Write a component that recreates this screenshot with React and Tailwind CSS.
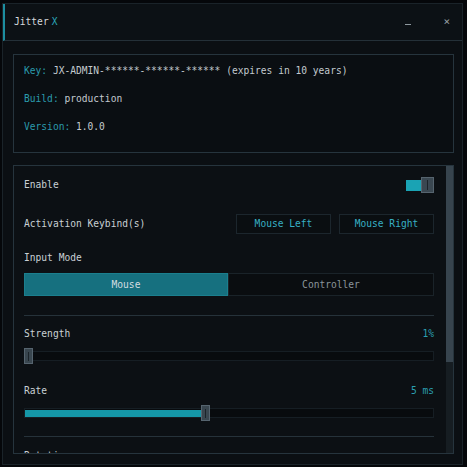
import React from "react";

const mono = { fontFamily: '"DejaVu Sans Mono", "Liberation Mono", monospace' };

function Slider({ knobLeft, filled }) {
  return (
    <div className="relative h-[16px] w-full">
      <div className="absolute left-0 right-0 top-[3px] h-[10px] border border-[#161e24] bg-[#080b0e]" />
      {filled && (
        <div
          className="absolute left-[1px] top-[5px] h-[7px] bg-[#1597a8]"
          style={{ width: knobLeft }}
        />
      )}
      <div
        className="absolute top-0 flex h-[16px] w-[9px] items-center justify-center border border-[#56646f] bg-[#39464f]"
        style={{ left: knobLeft }}
      >
        <div className="h-[9px] w-px bg-[#1b2329]" />
      </div>
    </div>
  );
}

export default function App() {
  return (
    <div
      className="h-[467px] w-[467px] overflow-hidden bg-[#05070a] pl-[2px] pt-[3px] text-[9.6px] leading-[12px]"
      style={mono}
    >
      <div className="flex h-[462px] w-[461px] flex-col border border-[#1a2329] bg-[#0b0f13]">
        {/* Title bar */}
        <div className="flex h-[37px] items-center border-b border-[#243038] border-l-2 border-l-[#1c8ea0] bg-[#0c1115] pl-[9px] pr-[12px]">
          <span className="text-[#d5dadd]">Jitter</span>
          <span className="ml-[3px] text-[#2aa7ba]">X</span>
          <div className="flex-1" />
          <span className="mr-[32px] mt-[4px] block h-px w-[6px] bg-[#8e989e]" />
          <span className="text-[11px] text-[#9aa3a8]">×</span>
        </div>

        {/* Info box */}
        <div className="ml-[10px] mt-[13px] w-[441px] border border-[#26343d] bg-[#0a0e12] pb-[19px] pl-[10px] pt-[10px]">
          <div className="flex flex-col gap-[16px]">
            <div>
              <span className="text-[#2b9bad]">Key: </span>
              <span className="text-[#c3cacf]">JX-ADMIN-******-******-****** (expires in 10 years)</span>
            </div>
            <div>
              <span className="text-[#2b9bad]">Build: </span>
              <span className="text-[#c3cacf]">production</span>
            </div>
            <div>
              <span className="text-[#2b9bad]">Version: </span>
              <span className="text-[#c3cacf]">1.0.0</span>
            </div>
          </div>
        </div>

        {/* Settings panel */}
        <div className="ml-[10px] mt-[12px] flex h-[289px] w-[441px] overflow-hidden border border-[#26343d] bg-[#0c1014]">
          <div className="w-[430px] shrink-0 pl-[10px] pr-[10px] pt-[9px] text-[#c9d0d4]">
            <div className="flex h-[20px] items-center justify-between">
              <span>Enable</span>
              <div className="flex h-[16px] items-center">
                <div className="h-[11px] w-[15px] bg-[#1aa3b4]" />
                <div className="flex h-[16px] w-[13px] items-center justify-center border border-[#56646f] bg-[#3a4751]">
                  <div className="h-[10px] w-px bg-[#1b2329]" />
                </div>
              </div>
            </div>

            <div className="mt-[19px] flex h-[20px] items-center justify-between">
              <span>Activation Keybind(s)</span>
              <div className="flex gap-[8px]">
                <div className="flex h-[20px] w-[95px] items-center justify-center border border-[#1c262d] bg-[#0a0e11] text-[#37b0c4]">
                  Mouse Left
                </div>
                <div className="flex h-[20px] w-[95px] items-center justify-center border border-[#1c262d] bg-[#0a0e11] text-[#37b0c4]">
                  Mouse Right
                </div>
              </div>
            </div>

            <div className="mt-[18px]">Input Mode</div>
            <div className="mt-[9px] flex h-[23px]">
              <div className="flex w-[204px] items-center justify-center border border-[#1b7f8e] bg-[#16707f] text-[#d3dde0]">
                Mouse
              </div>
              <div className="flex flex-1 items-center justify-center border border-[#1a2329] bg-[#0a0d10] text-[#8b959b]">
                Controller
              </div>
            </div>

            <div className="mt-[19px] h-px bg-[#26323a]" />

            <div className="mt-[12px] flex justify-between">
              <span>Strength</span>
              <span className="text-[#2b9fb1]">1%</span>
            </div>
            <div className="mt-[8px]">
              <Slider knobLeft={0} />
            </div>

            <div className="mt-[21px] flex justify-between">
              <span>Rate</span>
              <span className="text-[#2b9fb1]">5 ms</span>
            </div>
            <div className="mt-[8px]">
              <Slider knobLeft={177} filled />
            </div>

            <div className="mt-[15px] h-px bg-[#26323a]" />

            <div className="mt-[13px]">Rotation</div>
          </div>
          <div className="ml-[2px] w-[7px] shrink-0 bg-[#161d22]">
            <div className="h-[196px] w-full bg-[#37444e]" />
          </div>
        </div>
      </div>
    </div>
  );
}
